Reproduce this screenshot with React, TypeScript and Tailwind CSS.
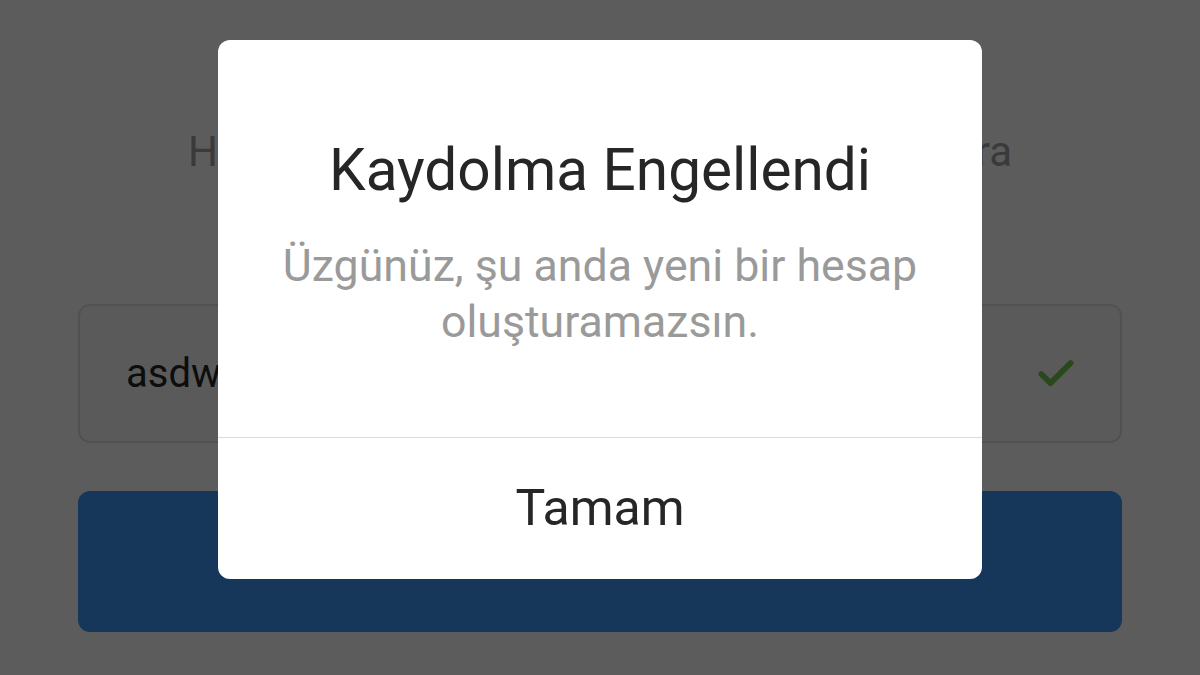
import { Check } from 'lucide-react';

const font = { fontFamily: 'Roboto, "Noto Sans", sans-serif' };

const SignupPage = () => (
  <div className="flex flex-col px-[78px] pt-[122px]">
    <p className="mx-auto w-[824px] text-[42px] leading-[60px] text-[#a0a0a0] whitespace-nowrap [text-align-last:justify]">
      Hesabın için kullanıcı adı seç. Daha sonra
    </p>
    <div className="mt-[122px] h-[139px] rounded-[12px] border-2 border-[#e0e0e0] bg-[#fafafa] flex items-center pl-[46px] pr-[42px]">
      <span className="flex-1 text-[40px] text-[#262626]">asdwqe2931</span>
      <Check className="h-[44px] w-[44px] text-[#78c850]" strokeWidth={3.2} />
    </div>
    <button className="mt-[48px] h-[141px] rounded-[12px] bg-[#3d96f8] text-white text-[40px] font-medium">
      İleri
    </button>
  </div>
);

export default function App() {
  return (
    <div className="relative h-[675px] w-[1200px] overflow-hidden bg-white" style={font}>
      <SignupPage />

      {/* dim overlay + dialog */}
      <div className="absolute inset-0 bg-black/[0.64] flex justify-center items-start pt-[40px]">
        <div className="w-[764px] h-[539px] rounded-[12px] bg-white flex flex-col overflow-hidden">
          <div className="h-[397px] flex flex-col items-center pt-[98px]">
            <h1 className="text-[58.5px] leading-[64px] text-[#262626] font-normal whitespace-nowrap">Kaydolma Engellendi</h1>
            <p className="mt-[36px] text-center text-[44.7px] leading-[56px] text-[#9a9a9a] whitespace-nowrap">
              Üzgünüz, şu anda yeni bir hesap
              <br />
              oluşturamazsın.
            </p>
          </div>
          <div className="h-px bg-[#dbdbdb]" />
          <button className="flex-1 flex items-center justify-center text-[50px] text-[#262626]">
            Tamam
          </button>
        </div>
      </div>
    </div>
  );
}
